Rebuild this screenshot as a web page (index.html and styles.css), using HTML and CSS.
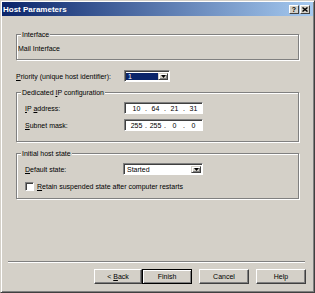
FILE: index.html
```html
<!DOCTYPE html>
<html>
<head>
    <title>Host Parameters</title>
    <link rel="stylesheet" href="styles.css">
</head>
<body>
    <div class="window">
        <div class="titlebar">
            <span class="title">Host Parameters</span>
            <div class="title-buttons">
                <span class="title-btn">?</span>
                <span class="title-btn">
                    <svg width="6" height="5" viewBox="0 0 6 5"><path d="M0.5 0.5L5.5 4.5M5.5 0.5L0.5 4.5" stroke="#000" stroke-width="1.4"/></svg>
                </span>
            </div>
        </div>

        <div class="content">
            <fieldset class="group group-interface">
                <legend>Interface</legend>
                <div class="interface-name">Mail Interface</div>
            </fieldset>

            <div class="row row-priority">
                <span class="label"><u>P</u>riority (unique host identifier):</span>
                <div class="field combo combo-small">
                    <span class="combo-value selected">1</span>
                    <span class="combo-arrow">
                        <svg width="5" height="3" viewBox="0 0 5 3"><path d="M0 0H5L2.5 3Z" fill="#000"/></svg>
                    </span>
                </div>
            </div>

            <fieldset class="group group-ip">
                <legend>Dedicated <u>I</u>P configuration</legend>
                <div class="row">
                    <span class="label"><u>I</u>P <u>a</u>ddress:</span>
                    <div class="field ip">
                        <span class="octet">10</span><span class="dot">.</span>
                        <span class="octet">64</span><span class="dot">.</span>
                        <span class="octet">21</span><span class="dot">.</span>
                        <span class="octet">31</span>
                    </div>
                </div>
                <div class="row row-next">
                    <span class="label"><u>S</u>ubnet mask:</span>
                    <div class="field ip">
                        <span class="octet">255</span><span class="dot">.</span>
                        <span class="octet">255</span><span class="dot">.</span>
                        <span class="octet">0</span><span class="dot">.</span>
                        <span class="octet">0</span>
                    </div>
                </div>
            </fieldset>

            <fieldset class="group group-state">
                <legend>Initial host state</legend>
                <div class="row">
                    <span class="label label-state"><u>D</u>efault state:</span>
                    <div class="field combo combo-wide">
                        <span class="combo-value">Started</span>
                        <span class="combo-arrow">
                            <svg width="5" height="3" viewBox="0 0 5 3"><path d="M0 0H5L2.5 3Z" fill="#000"/></svg>
                        </span>
                    </div>
                </div>
                <div class="check-row">
                    <span class="checkbox"></span>
                    <span><u>R</u>etain suspended state after computer restarts</span>
                </div>
            </fieldset>
        </div>

        <div class="separator"></div>

        <div class="buttons">
            <button class="btn btn-back">&lt; <u>B</u>ack</button>
            <button class="btn btn-default">Finish</button>
            <button class="btn">Cancel</button>
            <button class="btn">Help</button>
        </div>
    </div>
</body>
</html>
```

FILE: styles.css
```css
body {
    margin: 0;
    padding: 0;
    font-family: 'Liberation Sans', Arial, sans-serif;
    font-size: 7px;
    line-height: 9px;
    color: #000;
    background-color: #d4d0c8;
}

u {
    text-decoration-thickness: 1px;
    text-underline-offset: 1px;
}

.window {
    width: 315px;
    height: 293px;
    box-sizing: border-box;
    display: flex;
    flex-direction: column;
    padding: 1px;
    background-color: #d4d0c8;
    border: 1px solid;
    border-color: #d4d0c8 #404040 #404040 #d4d0c8;
    box-shadow: inset 1px 1px 0 #fff, inset -1px -1px 0 #808080;
}

.titlebar {
    height: 14px;
    display: flex;
    align-items: center;
    justify-content: space-between;
    padding: 0 3px 0 1px;
    background: linear-gradient(to right, #0a246a, #a6caf0);
}

.title {
    color: #fff;
    font-weight: bold;
    font-size: 8px;
}

.title-buttons {
    display: flex;
    gap: 1px;
}

.title-btn {
    width: 10px;
    height: 9px;
    box-sizing: border-box;
    display: flex;
    align-items: center;
    justify-content: center;
    background-color: #d4d0c8;
    border: 1px solid;
    border-color: #fff #404040 #404040 #fff;
    font-weight: bold;
    font-size: 7px;
    line-height: 7px;
}

.content {
    flex: 1;
    padding: 14px 14px 0;
}

.group {
    margin: 0;
    padding: 5px 8px 6px;
    min-inline-size: 0;
    border: 1px solid #808080;
    box-shadow: inset 1px 1px 0 #fff, 1px 1px 0 #fff;
}

.group legend {
    margin-left: -4px;
    padding: 0 1px;
    line-height: 9px;
    background-color: #d4d0c8;
}

.interface-name {
    margin-left: -7px;
}

.group-ip {
    margin-top: 6px;
    padding-bottom: 10px;
}

.group-state {
    margin-top: 7px;
    padding-bottom: 7px;
}

.row {
    display: flex;
    align-items: center;
    height: 12px;
}

.row-next {
    margin-top: 5px;
}

.row-priority {
    margin-top: 10px;
}

.label {
    width: 99px;
    flex-shrink: 0;
}

.row-priority .label {
    width: 108px;
}

.label-state {
    width: 98px;
}

.field {
    height: 12px;
    box-sizing: border-box;
    display: flex;
    align-items: center;
    background-color: #fff;
    border: 1px solid;
    border-color: #808080 #fff #fff #808080;
    box-shadow: inset 1px 1px 0 #404040;
}

.ip {
    width: 79px;
    padding-left: 5px;
}

.octet {
    width: 13px;
    text-align: center;
}

.dot {
    width: 6px;
    text-align: center;
}

.combo {
    padding: 1px;
    align-items: stretch;
}

.combo-small {
    width: 46px;
}

.combo-wide {
    width: 80px;
}

.combo-value {
    flex: 1;
    padding-left: 2px;
    display: flex;
    align-items: center;
    margin-top: 1px;
}

.combo-value.selected {
    color: #fff;
    background-color: #0a246a;
}

.combo-arrow {
    width: 10px;
    margin-top: 1px;
    box-sizing: border-box;
    display: flex;
    align-items: center;
    justify-content: center;
    background-color: #d4d0c8;
    border: 1px solid;
    border-color: #d4d0c8 #404040 #404040 #d4d0c8;
    box-shadow: inset 1px 1px 0 #fff, inset -1px -1px 0 #808080;
}

.check-row {
    display: flex;
    align-items: center;
    margin-top: 7px;
    height: 9px;
}

.checkbox {
    width: 9px;
    height: 9px;
    box-sizing: border-box;
    margin-right: 3px;
    background-color: #fff;
    border: 1px solid;
    border-color: #808080 #fff #fff #808080;
    box-shadow: inset 1px 1px 0 #404040;
}

.separator {
    height: 2px;
    box-sizing: border-box;
    margin: 0 8px 0 6px;
    border-top: 1px solid #808080;
    border-bottom: 1px solid #fff;
}

.buttons {
    display: flex;
    justify-content: flex-end;
    gap: 7px;
    padding: 6px 7px 7px;
}

.btn {
    width: 50px;
    height: 15px;
    box-sizing: border-box;
    padding: 0;
    font-family: inherit;
    font-size: 7px;
    color: #000;
    background-color: #d4d0c8;
    border: 1px solid;
    border-color: #fff #404040 #404040 #fff;
    box-shadow: inset -1px -1px 0 #808080;
}

.btn-back {
    width: 48px;
    margin-right: -7px;
}

.btn-default {
    border-color: #000;
    box-shadow: inset 1px 1px 0 #fff, inset -1px -1px 0 #808080;
}
```
